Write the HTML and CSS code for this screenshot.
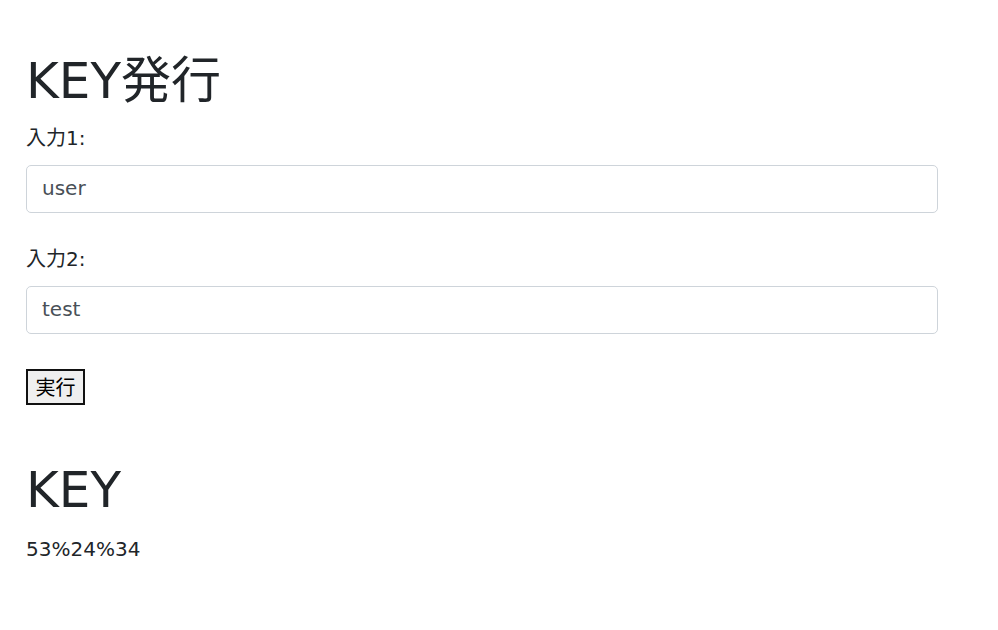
FILE: index.html
```html
<!DOCTYPE html>
<html lang="ja">
<head>
<meta charset="utf-8">
<title>KEY発行</title>
<link rel="stylesheet" href="styles.css">
</head>
<body>
<main class="container">
  <h1 class="title">KEY発行</h1>
  <form class="form">
    <div class="form-group">
      <label class="label" for="in1">入力1:</label>
      <input class="form-control" id="in1" type="text" value="user">
    </div>
    <div class="form-group">
      <label class="label" for="in2">入力2:</label>
      <input class="form-control" id="in2" type="text" value="test">
    </div>
    <button class="btn" type="button">実行</button>
  </form>
  <h1 class="title key-title">KEY</h1>
  <p class="result">53%24%34</p>
</main>
</body>
</html>
```

FILE: styles.css
```css
html, body {
  margin: 0;
  padding: 0;
  background: #fff;
}
body {
  font-family: "DejaVu Sans", "Noto Sans CJK JP", sans-serif;
  font-size: 20px;
  line-height: 1.5;
  color: #212529;
}
.container {
  padding: 51px 0 0 26px;
  width: 912px;
}
.title {
  font-size: 50px;
  font-weight: 400;
  line-height: 60px;
  margin: 0 0 12px;
  height: 60px;
}
.label {
  display: block;
  margin-bottom: 12px;
  height: 30px;
  line-height: 30px;
}
.form-group {
  margin-bottom: 31px;
}
.form-group + .form-group {
  margin-bottom: 35px;
}
.form-control {
  display: block;
  box-sizing: border-box;
  width: 912px;
  height: 48px;
  padding: 0 15px 2px;
  font-family: inherit;
  font-size: 20px;
  color: #495057;
  background: #fff;
  border: 1px solid #ced4da;
  border-radius: 5px;
  outline: none;
}
.btn {
  display: block;
  box-sizing: border-box;
  width: 59px;
  height: 36px;
  padding: 0;
  font-family: "Noto Sans CJK JP", sans-serif;
  font-size: 20px;
  line-height: 1;
  color: #000;
  background: #efefef;
  border: 2px solid #111;
  border-radius: 0;
}
.key-title {
  margin-top: 55px;
  margin-bottom: 14px;
}
.result {
  margin: 0;
  line-height: 30px;
}
```
